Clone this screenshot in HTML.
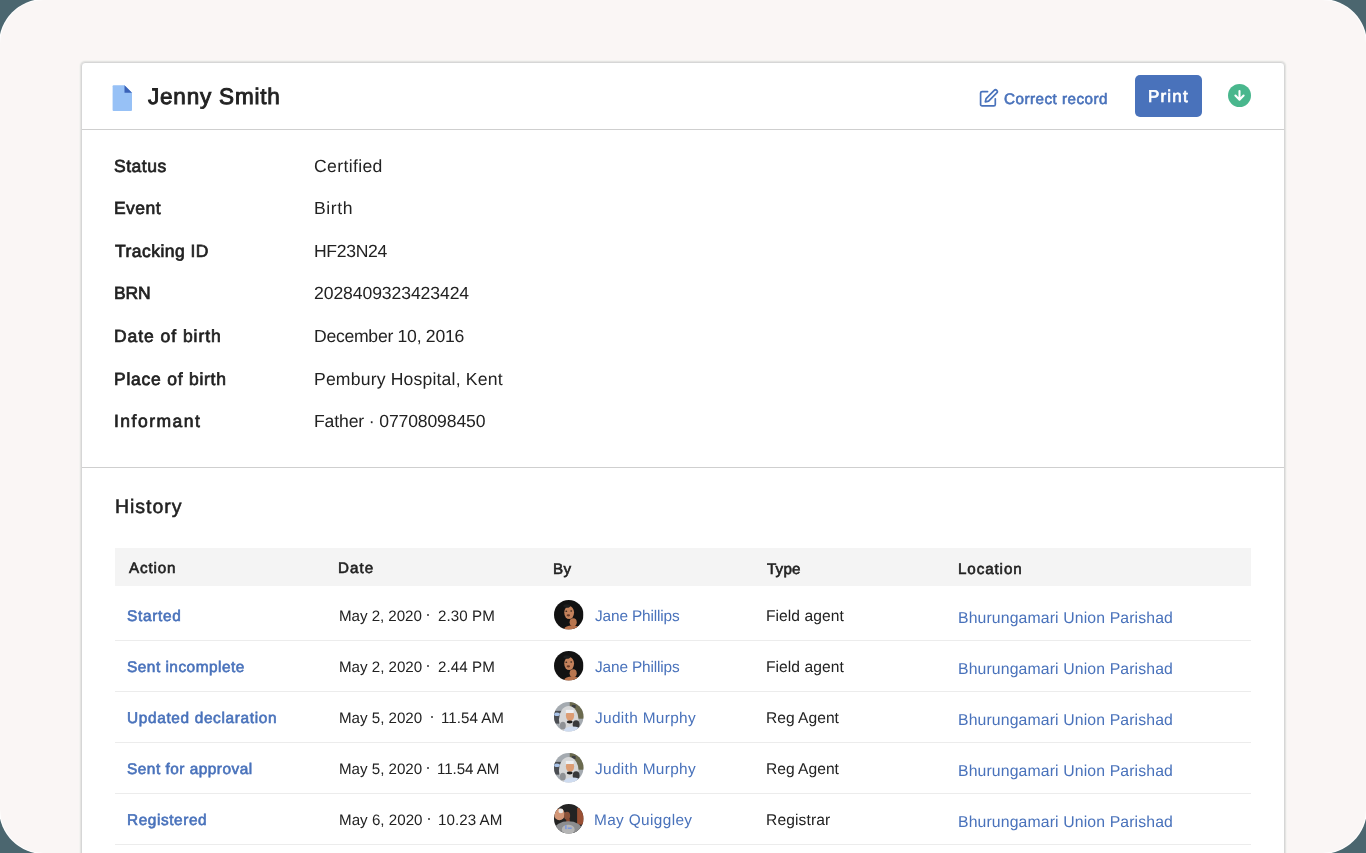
<!DOCTYPE html>
<html><head><meta charset="utf-8">
<style>
html,body{margin:0;padding:0;width:1366px;height:853px;overflow:hidden;background:#4b666f;}
body{position:relative;font-family:"Liberation Sans",sans-serif;}
.page{position:absolute;left:0;top:0;width:1366px;height:853px;border-radius:44px;background:#faf6f5;overflow:hidden;box-shadow:0 0 0 1px #fff;}
.card{position:absolute;left:81px;top:62px;width:1202px;height:900px;border:1px solid #d6d6d6;border-radius:4px;background:#fff;box-shadow:0 0 0 1px #e5e4e2,0 0 0 2px #f4f3f1;}
.hl{position:absolute;left:82px;width:1202px;height:1px;background:#cfcfcf;}
.thbg{position:absolute;left:115px;top:548px;width:1136px;height:38px;background:#f4f4f4;}
.rl{position:absolute;left:115px;width:1136px;height:1px;background:#ececec;}
.t{position:absolute;white-space:pre;will-change:transform;text-rendering:geometricPrecision;}
.btn{position:absolute;left:1135px;top:75px;width:67px;height:42px;border-radius:5px;background:#4972bb;}
.dl{position:absolute;left:1228px;top:84.2px;width:23.1px;height:23.1px;border-radius:50%;background:#49b78d;}
.dot{position:absolute;width:2px;height:2px;background:#333;border-radius:1px;}
.av{position:absolute;overflow:visible;}
</style></head><body>
<div class="page">
<div class="card"></div>
<div class="hl" style="top:129px"></div>
<div class="hl" style="top:467px"></div>
<svg style="position:absolute;left:112px;top:85px" width="21" height="27" viewBox="0 0 21 27">
<path d="M1.5 0.3 H12.5 L20 7.8 V25 Q20 26 19 26 H1.5 Q0.6 26 0.6 25 V1.3 Q0.6 0.3 1.5 0.3Z" fill="#97c1f6"/>
<path d="M12.5 0.3 L20 7.8 H12.5Z" fill="#3a62b8"/>
</svg>
<svg style="position:absolute;left:979px;top:88px" width="20" height="20" viewBox="0 0 20 20" fill="none" stroke="#4972bb" stroke-width="1.7" stroke-linecap="round" stroke-linejoin="round">
<path d="M8.6 3.6H3.1A1.5 1.5 0 0 0 1.6 5.1V16.4A1.5 1.5 0 0 0 3.1 17.9H14.8A1.5 1.5 0 0 0 16.3 16.4V10.8"/>
<path d="M15.2 2.4a1.8 1.8 0 0 1 2.55 2.55L9.6 13.1 6.3 13.9 7.1 10.6Z"/>
</svg>
<div class="btn"></div>
<div class="dl"></div>
<svg style="position:absolute;left:1228px;top:84px" width="24" height="24" viewBox="0 0 24 24" fill="none" stroke="#fff" stroke-width="2.1" stroke-linecap="round" stroke-linejoin="round">
<path d="M11.5 7.1V15.5M7.4 11.6L11.5 15.7 15.6 11.6"/>
</svg>
<div class="thbg"></div>
<div class="rl" style="top:640px"></div>
<div class="rl" style="top:691px"></div>
<div class="rl" style="top:742px"></div>
<div class="rl" style="top:793px"></div>
<div class="rl" style="top:844px"></div>
<svg class="av" style="left:553.50px;top:600.20px" width="29.5" height="29.5" viewBox="0 0 30 30"><defs><clipPath id="c0"><circle cx="15" cy="15" r="15"/></clipPath></defs><g clip-path="url(#c0)"><rect width="30" height="30" fill="#121212"/>
<ellipse cx="15.4" cy="12.8" rx="5" ry="6.6" fill="#c4825c"/>
<ellipse cx="14.6" cy="15.6" rx="1.8" ry="1.1" fill="#6a3b28"/>
<ellipse cx="12.5" cy="11.5" rx="1" ry="0.7" fill="#3a2a20"/>
<ellipse cx="17.5" cy="11.2" rx="1" ry="0.7" fill="#3a2a20"/>
<ellipse cx="19.5" cy="22.5" rx="3.6" ry="4" fill="#b9764f"/>
<ellipse cx="18.5" cy="29.5" rx="8" ry="3.5" fill="#b8724c"/>
<ellipse cx="13" cy="6.2" rx="3.5" ry="1.8" fill="#1e1e1e"/></g></svg>
<svg class="av" style="left:553.50px;top:651.20px" width="29.5" height="29.5" viewBox="0 0 30 30"><defs><clipPath id="c1"><circle cx="15" cy="15" r="15"/></clipPath></defs><g clip-path="url(#c1)"><rect width="30" height="30" fill="#121212"/>
<ellipse cx="15.4" cy="12.8" rx="5" ry="6.6" fill="#c4825c"/>
<ellipse cx="14.6" cy="15.6" rx="1.8" ry="1.1" fill="#6a3b28"/>
<ellipse cx="12.5" cy="11.5" rx="1" ry="0.7" fill="#3a2a20"/>
<ellipse cx="17.5" cy="11.2" rx="1" ry="0.7" fill="#3a2a20"/>
<ellipse cx="19.5" cy="22.5" rx="3.6" ry="4" fill="#b9764f"/>
<ellipse cx="18.5" cy="29.5" rx="8" ry="3.5" fill="#b8724c"/>
<ellipse cx="13" cy="6.2" rx="3.5" ry="1.8" fill="#1e1e1e"/></g></svg>
<svg class="av" style="left:553.50px;top:702.20px" width="29.5" height="29.5" viewBox="0 0 30 30"><defs><clipPath id="c2"><circle cx="15" cy="15" r="15"/></clipPath></defs><g clip-path="url(#c2)"><rect width="30" height="30" fill="#a4aab0"/>
<rect x="16" y="0" width="15" height="17" fill="#6b6a4e"/>
<rect x="18" y="3" width="4" height="3" fill="#3c3f42"/>
<rect x="0" y="9" width="8" height="13" fill="#4a4d52"/>
<ellipse cx="3" cy="12.5" rx="3" ry="1.8" fill="#a9c3e8"/>
<ellipse cx="15" cy="18" rx="10" ry="14" fill="#d6d7d8"/>
<ellipse cx="22.5" cy="23" rx="3.5" ry="4.5" fill="#38393b"/>
<ellipse cx="19" cy="29" rx="9" ry="4" fill="#cfdcf0"/>
<ellipse cx="16.3" cy="13.8" rx="4.2" ry="5.4" fill="#dc9d74"/>
<rect x="12" y="8" width="8" height="3.2" fill="#eef0f2"/>
<ellipse cx="16" cy="20.3" rx="3" ry="1.5" fill="#202020"/>
<ellipse cx="9" cy="24" rx="3" ry="4" fill="#8f9296"/></g></svg>
<svg class="av" style="left:553.50px;top:753.20px" width="29.5" height="29.5" viewBox="0 0 30 30"><defs><clipPath id="c3"><circle cx="15" cy="15" r="15"/></clipPath></defs><g clip-path="url(#c3)"><rect width="30" height="30" fill="#a4aab0"/>
<rect x="16" y="0" width="15" height="17" fill="#6b6a4e"/>
<rect x="18" y="3" width="4" height="3" fill="#3c3f42"/>
<rect x="0" y="9" width="8" height="13" fill="#4a4d52"/>
<ellipse cx="3" cy="12.5" rx="3" ry="1.8" fill="#a9c3e8"/>
<ellipse cx="15" cy="18" rx="10" ry="14" fill="#d6d7d8"/>
<ellipse cx="22.5" cy="23" rx="3.5" ry="4.5" fill="#38393b"/>
<ellipse cx="19" cy="29" rx="9" ry="4" fill="#cfdcf0"/>
<ellipse cx="16.3" cy="13.8" rx="4.2" ry="5.4" fill="#dc9d74"/>
<rect x="12" y="8" width="8" height="3.2" fill="#eef0f2"/>
<ellipse cx="16" cy="20.3" rx="3" ry="1.5" fill="#202020"/>
<ellipse cx="9" cy="24" rx="3" ry="4" fill="#8f9296"/></g></svg>
<svg class="av" style="left:553.50px;top:804.20px" width="29.5" height="29.5" viewBox="0 0 30 30"><defs><clipPath id="c4"><circle cx="15" cy="15" r="15"/></clipPath></defs><g clip-path="url(#c4)"><rect width="30" height="30" fill="#232323"/>
<ellipse cx="5.5" cy="10.5" rx="5.5" ry="6" fill="#d39676"/>
<ellipse cx="7" cy="7" rx="2.5" ry="2.5" fill="#e9e6e3"/>
<rect x="23.5" y="4" width="7" height="17" fill="#9a5034"/>
<ellipse cx="13.3" cy="12" rx="3.1" ry="4.2" fill="#8b5239"/>
<rect x="12.5" y="15" width="3.5" height="6" fill="#8a4a30"/>
<ellipse cx="14.5" cy="26" rx="14" ry="8.5" fill="#8c8d8f"/>
<ellipse cx="14.5" cy="26" rx="6.5" ry="5" fill="#b5b5b5"/>
<rect x="11.5" y="21.5" width="1.2" height="4" fill="#6d8ee6"/>
<rect x="14" y="24" width="4" height="1.2" fill="#6d8ee6"/></g></svg>
<div class="dot" style="left:426.5px;top:614.3px"></div>
<div class="dot" style="left:426.5px;top:665.3px"></div>
<div class="dot" style="left:430.8px;top:716.3px"></div>
<div class="dot" style="left:427.3px;top:767.3px"></div>
<div class="dot" style="left:427.6px;top:818.3px"></div>
<div class="t" id="name" style="left:147.66px;top:86.00px;font-size:22.500px;line-height:22.500px;letter-spacing:0.805px;color:#222222;-webkit-text-stroke:0.900px #222222">Jenny Smith</div>
<div class="t" id="corr" style="left:1004.14px;top:91.81px;font-size:15.200px;line-height:15.200px;letter-spacing:0.494px;color:#4972bb;-webkit-text-stroke:0.608px #4972bb">Correct record</div>
<div class="t" id="print" style="left:1147.94px;top:88.40px;font-size:17.000px;line-height:17.000px;letter-spacing:1.178px;color:#ffffff;-webkit-text-stroke:0.680px #ffffff">Print</div>
<div class="t" id="lab0" style="left:114.31px;top:157.50px;font-size:17.500px;line-height:17.500px;letter-spacing:0.518px;color:#222222;-webkit-text-stroke:0.700px #222222">Status</div>
<div class="t" id="val0" style="left:314.42px;top:157.51px;font-size:17.600px;line-height:17.600px;letter-spacing:0.358px;color:#222222;font-weight:400">Certified</div>
<div class="t" id="lab1" style="left:113.70px;top:200.14px;font-size:17.500px;line-height:17.500px;letter-spacing:0.444px;color:#222222;-webkit-text-stroke:0.700px #222222">Event</div>
<div class="t" id="val1" style="left:313.89px;top:200.13px;font-size:17.600px;line-height:17.600px;letter-spacing:0.596px;color:#222222;font-weight:400">Birth</div>
<div class="t" id="lab2" style="left:114.66px;top:242.77px;font-size:17.500px;line-height:17.500px;letter-spacing:0.461px;color:#222222;-webkit-text-stroke:0.700px #222222">Tracking ID</div>
<div class="t" id="val2" style="left:313.89px;top:242.76px;font-size:17.600px;line-height:17.600px;letter-spacing:-0.349px;color:#222222;font-weight:400">HF23N24</div>
<div class="t" id="lab3" style="left:113.70px;top:285.39px;font-size:17.500px;line-height:17.500px;letter-spacing:-0.162px;color:#222222;-webkit-text-stroke:0.700px #222222">BRN</div>
<div class="t" id="val3" style="left:314.42px;top:285.40px;font-size:17.600px;line-height:17.600px;letter-spacing:-0.095px;color:#222222;font-weight:400">2028409323423424</div>
<div class="t" id="lab4" style="left:113.70px;top:328.04px;font-size:17.500px;line-height:17.500px;letter-spacing:0.954px;color:#222222;-webkit-text-stroke:0.700px #222222">Date of birth</div>
<div class="t" id="val4" style="left:313.89px;top:328.03px;font-size:17.600px;line-height:17.600px;letter-spacing:-0.271px;color:#222222;font-weight:400">December 10, 2016</div>
<div class="t" id="lab5" style="left:113.70px;top:370.66px;font-size:17.500px;line-height:17.500px;letter-spacing:0.756px;color:#222222;-webkit-text-stroke:0.700px #222222">Place of birth</div>
<div class="t" id="val5" style="left:313.89px;top:370.66px;font-size:17.600px;line-height:17.600px;letter-spacing:0.176px;color:#222222;font-weight:400">Pembury Hospital, Kent</div>
<div class="t" id="lab6" style="left:113.52px;top:413.29px;font-size:17.500px;line-height:17.500px;letter-spacing:1.502px;color:#222222;-webkit-text-stroke:0.700px #222222">Informant</div>
<div class="t" id="val6" style="left:313.89px;top:413.28px;font-size:17.600px;line-height:17.600px;letter-spacing:-0.139px;color:#222222;font-weight:400">Father · 07708098450</div>
<div class="t" id="hist" style="left:114.84px;top:497.81px;font-size:19.500px;line-height:19.500px;letter-spacing:0.969px;color:#222222;-webkit-text-stroke:0.546px #222222">History</div>
<div class="t" id="thA" style="left:128.82px;top:560.91px;font-size:15.200px;line-height:15.200px;letter-spacing:0.842px;color:#222222;-webkit-text-stroke:0.608px #222222">Action</div>
<div class="t" id="thD" style="left:338.28px;top:560.71px;font-size:15.200px;line-height:15.200px;letter-spacing:1.076px;color:#222222;-webkit-text-stroke:0.608px #222222">Date</div>
<div class="t" id="thB" style="left:552.98px;top:561.61px;font-size:15.200px;line-height:15.200px;letter-spacing:0.484px;color:#222222;-webkit-text-stroke:0.608px #222222">By</div>
<div class="t" id="thT" style="left:767.02px;top:562.01px;font-size:15.200px;line-height:15.200px;letter-spacing:0.185px;color:#222222;-webkit-text-stroke:0.608px #222222">Type</div>
<div class="t" id="thL" style="left:958.18px;top:562.01px;font-size:15.200px;line-height:15.200px;letter-spacing:0.893px;color:#222222;-webkit-text-stroke:0.608px #222222">Location</div>
<div class="t" id="act0" style="left:127.11px;top:608.81px;font-size:15.400px;line-height:15.400px;letter-spacing:0.688px;color:#4972bb;-webkit-text-stroke:0.616px #4972bb">Started</div>
<div class="t" id="dt0" style="left:338.69px;top:608.80px;font-size:15.150px;line-height:15.150px;letter-spacing:-0.041px;color:#222222;font-weight:400">May 2, 2020</div>
<div class="t" id="tm0" style="left:437.54px;top:608.80px;font-size:15.150px;line-height:15.150px;letter-spacing:0.069px;color:#222222;font-weight:400">2.30 PM</div>
<div class="t" id="nm0" style="left:595.27px;top:608.81px;font-size:15.400px;line-height:15.400px;letter-spacing:-0.142px;color:#4972bb;font-weight:400">Jane Phillips</div>
<div class="t" id="ty0" style="left:766.25px;top:608.81px;font-size:15.600px;line-height:15.600px;letter-spacing:0.058px;color:#222222;font-weight:400">Field agent</div>
<div class="t" id="loc0" style="left:958.44px;top:610.82px;font-size:15.800px;line-height:15.800px;letter-spacing:0.125px;color:#4972bb;font-weight:400">Bhurungamari Union Parishad</div>
<div class="t" id="act1" style="left:127.11px;top:659.81px;font-size:15.400px;line-height:15.400px;letter-spacing:0.498px;color:#4972bb;-webkit-text-stroke:0.616px #4972bb">Sent incomplete</div>
<div class="t" id="dt1" style="left:338.69px;top:659.80px;font-size:15.150px;line-height:15.150px;letter-spacing:-0.021px;color:#222222;font-weight:400">May 2, 2020</div>
<div class="t" id="tm1" style="left:437.54px;top:659.80px;font-size:15.150px;line-height:15.150px;letter-spacing:0.069px;color:#222222;font-weight:400">2.44 PM</div>
<div class="t" id="nm1" style="left:595.27px;top:659.81px;font-size:15.400px;line-height:15.400px;letter-spacing:-0.142px;color:#4972bb;font-weight:400">Jane Phillips</div>
<div class="t" id="ty1" style="left:766.25px;top:659.81px;font-size:15.600px;line-height:15.600px;letter-spacing:0.058px;color:#222222;font-weight:400">Field agent</div>
<div class="t" id="loc1" style="left:958.44px;top:661.82px;font-size:15.800px;line-height:15.800px;letter-spacing:0.125px;color:#4972bb;font-weight:400">Bhurungamari Union Parishad</div>
<div class="t" id="act2" style="left:126.64px;top:710.81px;font-size:15.400px;line-height:15.400px;letter-spacing:0.651px;color:#4972bb;-webkit-text-stroke:0.616px #4972bb">Updated declaration</div>
<div class="t" id="dt2" style="left:338.69px;top:710.80px;font-size:15.150px;line-height:15.150px;letter-spacing:-0.021px;color:#222222;font-weight:400">May 5, 2020</div>
<div class="t" id="tm2" style="left:441.26px;top:710.80px;font-size:15.150px;line-height:15.150px;letter-spacing:0.011px;color:#222222;font-weight:400">11.54 AM</div>
<div class="t" id="nm2" style="left:595.27px;top:710.81px;font-size:15.400px;line-height:15.400px;letter-spacing:0.333px;color:#4972bb;font-weight:400">Judith Murphy</div>
<div class="t" id="ty2" style="left:766.25px;top:710.81px;font-size:15.600px;line-height:15.600px;letter-spacing:0.009px;color:#222222;font-weight:400">Reg Agent</div>
<div class="t" id="loc2" style="left:958.44px;top:712.82px;font-size:15.800px;line-height:15.800px;letter-spacing:0.125px;color:#4972bb;font-weight:400">Bhurungamari Union Parishad</div>
<div class="t" id="act3" style="left:127.11px;top:761.81px;font-size:15.400px;line-height:15.400px;letter-spacing:0.501px;color:#4972bb;-webkit-text-stroke:0.616px #4972bb">Sent for approval</div>
<div class="t" id="dt3" style="left:338.69px;top:761.80px;font-size:15.150px;line-height:15.150px;letter-spacing:-0.021px;color:#222222;font-weight:400">May 5, 2020</div>
<div class="t" id="tm3" style="left:437.46px;top:761.80px;font-size:15.150px;line-height:15.150px;letter-spacing:-0.075px;color:#222222;font-weight:400">11.54 AM</div>
<div class="t" id="nm3" style="left:595.27px;top:761.81px;font-size:15.400px;line-height:15.400px;letter-spacing:0.333px;color:#4972bb;font-weight:400">Judith Murphy</div>
<div class="t" id="ty3" style="left:766.25px;top:761.81px;font-size:15.600px;line-height:15.600px;letter-spacing:0.009px;color:#222222;font-weight:400">Reg Agent</div>
<div class="t" id="loc3" style="left:958.44px;top:763.82px;font-size:15.800px;line-height:15.800px;letter-spacing:0.125px;color:#4972bb;font-weight:400">Bhurungamari Union Parishad</div>
<div class="t" id="act4" style="left:126.57px;top:812.81px;font-size:15.400px;line-height:15.400px;letter-spacing:0.575px;color:#4972bb;-webkit-text-stroke:0.616px #4972bb">Registered</div>
<div class="t" id="dt4" style="left:338.69px;top:812.80px;font-size:15.150px;line-height:15.150px;letter-spacing:0.019px;color:#222222;font-weight:400">May 6, 2020</div>
<div class="t" id="tm4" style="left:437.56px;top:812.80px;font-size:15.150px;line-height:15.150px;letter-spacing:0.045px;color:#222222;font-weight:400">10.23 AM</div>
<div class="t" id="nm4" style="left:594.27px;top:812.81px;font-size:15.400px;line-height:15.400px;letter-spacing:0.358px;color:#4972bb;font-weight:400">May Quiggley</div>
<div class="t" id="ty4" style="left:766.25px;top:812.81px;font-size:15.600px;line-height:15.600px;letter-spacing:0.128px;color:#222222;font-weight:400">Registrar</div>
<div class="t" id="loc4" style="left:958.44px;top:814.82px;font-size:15.800px;line-height:15.800px;letter-spacing:0.125px;color:#4972bb;font-weight:400">Bhurungamari Union Parishad</div>
</div>
</body></html>
